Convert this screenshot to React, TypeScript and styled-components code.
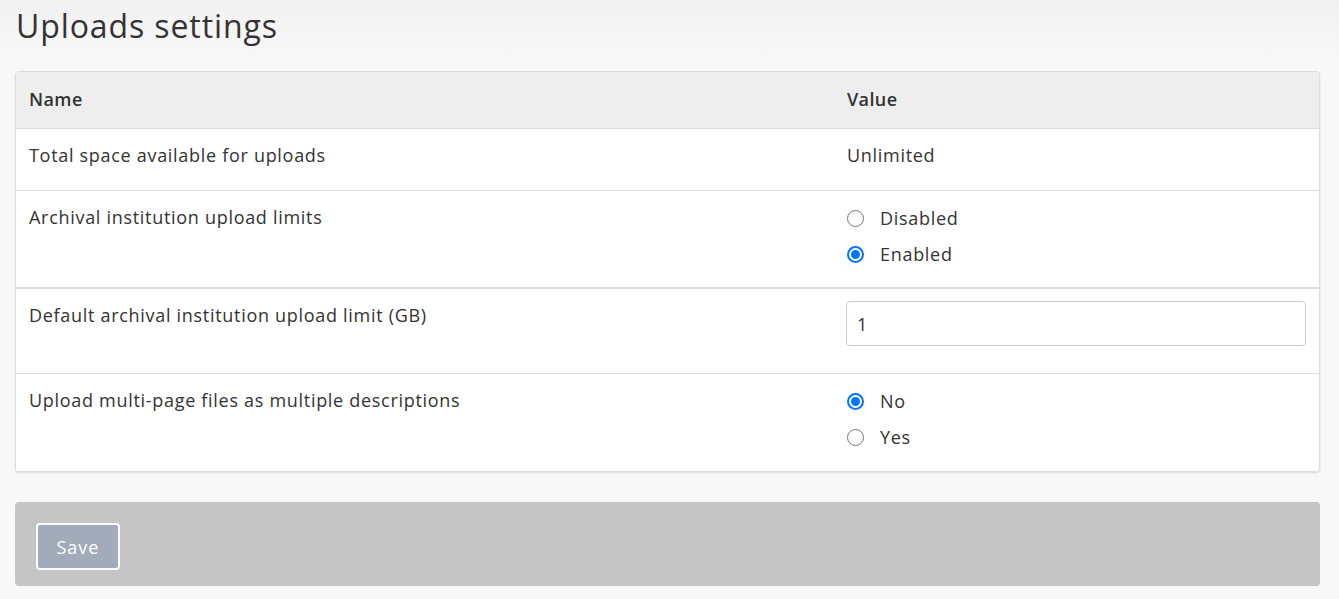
import React from "react";
import styled, { createGlobalStyle } from "styled-components";

const Global = createGlobalStyle`
  html, body { margin: 0; padding: 0; }
  body {
    background: linear-gradient(to bottom, #f1f1f1 0px, #f8f8f8 60px, #f8f8f8 100%);
    font-family: "Open Sans", "Noto Sans", sans-serif;
    color: #333;
    min-height: 599px;
  }
`;

const Page = styled.div`
  padding: 0 19px 0 15px;
`;

const Title = styled.h1`
  margin: 0;
  padding: 4px 0 0 1px;
  font-size: 32px;
  font-weight: 400;
  letter-spacing: 0.9px;
  line-height: 44px;
  color: #333;
  height: 67px;
`;

const Card = styled.div`
  background: #fff;
  border: 1px solid #dcdcdc;
  border-radius: 4px;
  box-shadow: 0 1px 2px rgba(0, 0, 0, 0.12);
  overflow: hidden;
`;

const Row = styled.div<{ $head?: boolean; $thick?: boolean }>`
  display: grid;
  grid-template-columns: 818px 1fr;
  background: ${(p) => (p.$head ? "#eeeeee" : "#fff")};
  border-top: ${(p) => (p.$head ? "none" : p.$thick ? "2px solid #dedede" : "1px solid #dedede")};
`;

const Cell = styled.div<{ $head?: boolean; $pb?: number }>`
  padding: ${(p) => (p.$head ? "14px 13px 15px" : `13px 13px ${p.$pb ?? 21}px`)};
  font-size: 18px;
  line-height: 27px;
  letter-spacing: ${(p) => (p.$head ? "0.4px" : "0.7px")};
  font-weight: ${(p) => (p.$head ? 600 : 400)};
  color: #333;
`;

const RadioList = styled.div`
  display: flex;
  flex-direction: column;
  gap: 9px;
  margin-top: 1px;
`;

const RadioRow = styled.label`
  display: flex;
  align-items: center;
  gap: 16px;
  font-size: 18px;
  line-height: 27px;
  letter-spacing: 0.7px;
  color: #333;
`;

const RadioDot = styled.span<{ $checked?: boolean }>`
  box-sizing: border-box;
  width: 17px;
  height: 17px;
  border-radius: 50%;
  border: ${(p) => (p.$checked ? "2px solid #0075ff" : "1.5px solid #767676")};
  background: #fff;
  display: flex;
  align-items: center;
  justify-content: center;
  &::after {
    content: "";
    display: ${(p) => (p.$checked ? "block" : "none")};
    width: 9px;
    height: 9px;
    border-radius: 50%;
    background: #0075ff;
  }
`;

const TextInput = styled.input`
  box-sizing: border-box;
  width: 460px;
  height: 45px;
  margin: -1px 0 6px -1px;
  padding: 0 10px;
  border: 1px solid #cccccc;
  border-radius: 4px;
  font-family: "Open Sans", sans-serif;
  font-size: 18px;
  color: #333;
  background: #fff;
  display: block;
`;

const Footer = styled.div`
  margin-top: 30px;
  background: #c5c5c5;
  border-radius: 4px;
  padding: 21px;
  height: 84px;
  box-sizing: border-box;
`;

const SaveButton = styled.button`
  box-sizing: border-box;
  width: 84px;
  height: 47px;
  background: #a2abb9;
  border: 2px solid #fff;
  border-radius: 4px;
  color: #fff;
  font-family: "Open Sans", sans-serif;
  font-size: 18px;
  letter-spacing: 1px;
  padding: 0;
`;

function Radios({ options, selected }: { options: string[]; selected: string }) {
  return (
    <RadioList>
      {options.map((o) => (
        <RadioRow key={o}>
          <RadioDot $checked={o === selected} />
          {o}
        </RadioRow>
      ))}
    </RadioList>
  );
}

export default function App() {
  return (
    <>
      <Global />
      <Page>
        <Title>Uploads settings</Title>
        <Card>
          <Row $head>
            <Cell $head>Name</Cell>
            <Cell $head>Value</Cell>
          </Row>
          <Row>
            <Cell>Total space available for uploads</Cell>
            <Cell>Unlimited</Cell>
          </Row>
          <Row>
            <Cell $pb={19}>Archival institution upload limits</Cell>
            <Cell $pb={19}>
              <Radios options={["Disabled", "Enabled"]} selected="Enabled" />
            </Cell>
          </Row>
          <Row $thick>
            <Cell>Default archival institution upload limit (GB)</Cell>
            <Cell>
              <TextInput defaultValue="1" />
            </Cell>
          </Row>
          <Row>
            <Cell $pb={20}>Upload multi-page files as multiple descriptions</Cell>
            <Cell $pb={20}>
              <Radios options={["No", "Yes"]} selected="No" />
            </Cell>
          </Row>
        </Card>
        <Footer>
          <SaveButton>Save</SaveButton>
        </Footer>
      </Page>
    </>
  );
}
